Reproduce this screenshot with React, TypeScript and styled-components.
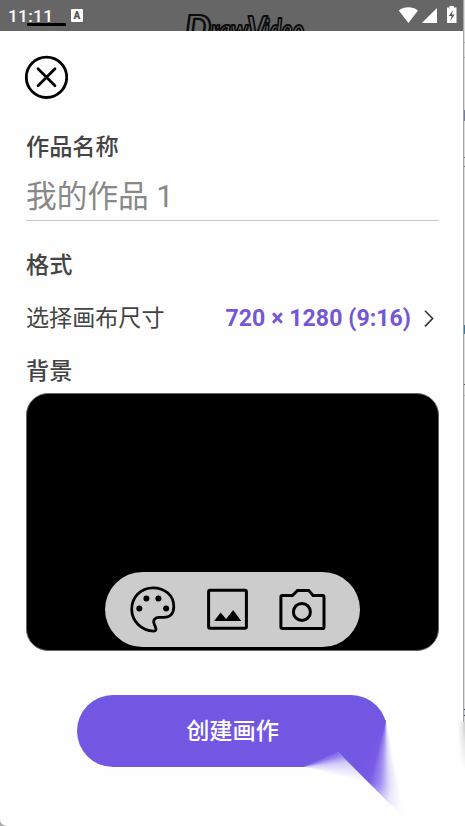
import React from "react";
import styled, { createGlobalStyle } from "styled-components";

const GlobalStyle = createGlobalStyle`
  * { box-sizing: border-box; }
  body { margin: 0; background: #fefefe; overflow: hidden; }
  button { padding: 0; border: 0; background: none; font: inherit; color: inherit; }
`;

const Screen = styled.div`
  position: relative;
  display: flex;
  flex-direction: column;
  width: 465px;
  height: 826px;
  overflow: hidden;
  background: #fefefe;
  color: #444;
  font-family: Roboto, "Noto Sans CJK SC", sans-serif;
`;

const StatusBar = styled.header`
  position: relative;
  display: flex;
  align-items: flex-start;
  flex: none;
  width: 463px;
  height: 31px;
  padding-left: 8px;
  overflow: hidden;
  background: #666;
  color: #fff;
`;

const Clock = styled.time`
  position: relative;
  z-index: 1;
  width: 62px;
  padding-top: 6px;
  font-size: 17.3px;
  line-height: 20px;
  font-weight: 500;
  letter-spacing: 0.3px;
`;

const MenuLine = styled.div`
  position: absolute;
  left: 27px;
  top: 23px;
  width: 39px;
  height: 3px;
  border-radius: 1px;
  background: #000;
`;

const InputBadge = styled.div`
  display: flex;
  align-items: center;
  justify-content: center;
  width: 12px;
  height: 13px;
  margin: 9px 0 0 1px;
  border-radius: 1px;
  background: #fff;
  color: #555;
  font-size: 10px;
  line-height: 13px;
  font-weight: 900;
`;

const Logo = styled.svg`
  position: absolute;
  left: 180px;
  top: 8px;
`;

const StatusIcons = styled.svg`
  margin-left: auto;
`;

const Form = styled.main`
  display: flex;
  flex-direction: column;
  width: 413px;
  margin-left: 26px;
`;

const CloseButton = styled.button`
  display: flex;
  width: 44px;
  height: 44px;
  margin: 24px 0 0 -2px;
`;

const Label = styled.h2<{ $gap: number }>`
  margin: ${({ $gap }) => $gap}px 0 0;
  height: 30px;
  font-size: 23.2px;
  line-height: 30px;
  font-weight: 500;
`;

const NameInput = styled.div`
  height: 59px;
  padding-top: 17px;
  border-bottom: 1px solid #c9c9c9;
  color: #888;
  font-size: 30.7px;
  line-height: 36px;
  font-weight: 400;
`;

const SizeRow = styled.div`
  display: flex;
  align-items: center;
  height: 34px;
  margin-top: 22px;
  font-size: 23.1px;
  line-height: 34px;
`;

const SizeValue = styled.strong`
  margin-left: auto;
  color: #7457d6;
  font-size: 23.1px;
  font-weight: 700;
  letter-spacing: 0.05px;
`;

const Chevron = styled.svg`
  margin: -1px 3px 0 11px;
`;

const Preview = styled.section`
  display: flex;
  align-items: flex-end;
  height: 258px;
  margin-top: 7px;
  padding: 0 0 3px 78px;
  border: 1px solid #666;
  border-radius: 22px;
  background: #000;
`;

const Tools = styled.div`
  display: flex;
  align-items: center;
  gap: 27px;
  width: 255px;
  height: 75px;
  padding: 0 0 1px 23.5px;
  border-radius: 38px;
  background: #ccc;
`;

const ToolButton = styled.button`
  display: flex;
  width: 48px;
  height: 48px;
`;

const CreateArea = styled.footer`
  position: relative;
  display: flex;
  width: 310px;
  height: 72px;
  margin: 44px 0 0 77px;
`;

const CreateButton = styled.button`
  width: 310px;
  height: 72px;
  padding-top: 1px;
  padding-left: 1px;
  border-radius: 36px;
  background: #7357e3;
  color: #fff;
  font-size: 23.2px;
  line-height: 71px;
  font-weight: 500;
  clip-path: polygon(0 0, 310px 0, 310px 26px, 309px 26px, 260px 57px, 227px 72px, 0 72px);
`;

/* The sheen fans out from the point where the button's right end stops. */
const Sheen = styled.div`
  position: absolute;
  left: 240px;
  top: 0;
  width: 100px;
  height: 131px;
  pointer-events: none;
  background: conic-gradient(
    from 160deg at 69px 25px,
    rgba(115, 87, 227, 0) 9deg,
    rgba(137, 113, 240, 0.25) 17deg,
    rgba(125, 98, 236, 0.72) 25deg,
    #775be5 35deg,
    #7357e3 50deg,
    #7357e3 100deg,
    transparent 101deg
  );
  clip-path: polygon(69px 25px, 100px 131px, 90px 126px, 19px 55px, 10px 52px, 10px 47px);
  mask-image: linear-gradient(#000 88px, rgba(0, 0, 0, 0.55) 107px, transparent 125px);
`;

const Mist = styled.div`
  position: absolute;
  left: 227px;
  top: 50px;
  width: 70px;
  height: 45px;
  pointer-events: none;
  background: conic-gradient(
    from 60deg at 0 22px,
    #7357e3 3deg,
    rgba(125, 98, 236, 0.82) 12deg,
    rgba(145, 125, 238, 0.4) 24deg,
    transparent 45deg
  );
  clip-path: polygon(0 22px, 33px 6px, 58px 31px, 58px 45px, 0 45px);
`;

const WindowEdge = styled.aside`
  position: absolute;
  top: 0;
  right: 0;
  width: 2px;
  height: 722px;
  border-left: 1px solid #a7a7aa;
  background: linear-gradient(#ddd 0 42px, #aaa 42px 43px, #ddd 43px 57px, #aaa 57px 58px, #ddd 58px 110px, #777d9a 110px 121px, #ddd 121px 157px, #777 157px 158px, #ddd 158px 166px, #777 166px 167px, #ddd 167px 325px, #397999 325px 334px, #ddd 334px 384px, #555 384px 385px, #ddd 385px 395px, #aaa 395px 396px, #ddd 396px 709px, #345 709px 710px, #ccd4dc 710px 715px, #345 715px 716px, #ddd 716px);
`;

const EdgeFade = styled.div`
  position: absolute;
  right: 0;
  top: 722px;
  width: 7px;
  height: 50px;
  background: radial-gradient(ellipse 7px 48px at right top, #ccc, #e9e9e9 45%, transparent);
`;

const Corner = styled.svg`
  position: absolute;
  left: 0;
  bottom: 0;
`;

const CloseIcon = () => (
  <svg width="44" height="44" viewBox="0 0 44 44" fill="none" stroke="#000" strokeLinecap="round">
    <circle cx="22.5" cy="22.3" r="20.2" strokeWidth="2.8" />
    <path d="m14 13.7 17 17M31 13.7l-17 17" strokeWidth="2.7" />
  </svg>
);

const PaletteIcon = () => (
  <svg width="48" height="48" viewBox="0 0 48 48" fill="none">
    <path d="M24 2.8C11.8 2.8 2.7 12 2.7 24c0 12.3 9.8 21.6 22 22.1 2.1 0 2.8-1.5 2-3.4l-1.5-3.8c-1.6-4 1-6.5 5-6.5h4.4c6.6 0 10.2-4 10.2-10.7C44.8 10.5 36 2.8 24 2.8Z" stroke="#000" strokeWidth="2.8" />
    <g fill="#000"><circle cx="10.3" cy="23.4" r="3" /><circle cx="17.4" cy="13.6" r="3" /><circle cx="29.4" cy="13.6" r="3" /><circle cx="37.1" cy="23.4" r="3" /></g>
  </svg>
);

const ImageIcon = () => (
  <svg width="48" height="48" viewBox="0 0 48 48">
    <rect x="4.6" y="5.3" width="37.8" height="38" rx="1.5" fill="none" stroke="#000" strokeWidth="3" />
    <path d="m10 36 6.7-8.5 5.4 6.5L29.2 25l8 11Z" fill="#000" />
  </svg>
);

const CameraIcon = () => (
  <svg width="48" height="48" viewBox="0 0 48 48" fill="none" stroke="#000" strokeWidth="3">
    <path d="M3.6 10.5h9.9l5-5.1h11.2l4.3 5.1h9.5q1.5 0 1.5 1.5v30q0 1.6-1.5 1.6H3.6q-1.7 0-1.7-1.6V12q0-1.5 1.7-1.5Z" />
    <circle cx="22.9" cy="26.9" r="8.5" />
  </svg>
);

export default function App() {
  return (
    <Screen>
      <GlobalStyle />
      <StatusBar>
        <MenuLine />
        <Clock>11:11</Clock>
        <InputBadge>A</InputBadge>
        <Logo width="128" height="40" viewBox="0 0 128 40">
          <g fill="#666" stroke="#0c0c0c" strokeWidth="2.2" strokeLinejoin="round" fontFamily="Lato" fontStyle="italic" fontWeight="900">
            <text x="5" y="32" fontSize="34" textLength="26" lengthAdjust="spacingAndGlyphs">D</text>
            <text x="31" y="33" fontSize="31" textLength="37" lengthAdjust="spacingAndGlyphs">raw</text>
            <text x="67" y="34" fontSize="36" textLength="19" lengthAdjust="spacingAndGlyphs">V</text>
            <text x="84" y="34" fontSize="32" textLength="40" lengthAdjust="spacingAndGlyphs">ideo</text>
          </g>
        </Logo>
        <StatusIcons width="66" height="31" viewBox="0 0 66 31" fill="#fff">
          <path d="M1.8 10.6C7 6.2 15.8 6.2 21 10.6L11.4 23ZM24.8 23 40 8v15Z" />
          <path d="M50 7.5h2.5V6H57v1.5h2.5V23H50V7.5Z" />
          <path d="m56.2 10-4.5 6h3l-1.5 5 4.5-6.4h-3Z" fill="#555" />
        </StatusIcons>
      </StatusBar>
      <Form>
        <CloseButton aria-label="关闭"><CloseIcon /></CloseButton>
        <Label $gap={33}>作品名称</Label>
        <NameInput>我的作品 1</NameInput>
        <Label $gap={29}>格式</Label>
        <SizeRow>
          <span>选择画布尺寸</span>
          <SizeValue>720 × 1280 (9:16)</SizeValue>
          <Chevron width="14" height="20" viewBox="0 0 14 20" fill="none" stroke="#333" strokeWidth="1.6"><path d="m3 1.7 7.6 7.8L3 17.4" /></Chevron>
        </SizeRow>
        <Label $gap={20}>背景</Label>
        <Preview>
          <Tools>
            <ToolButton aria-label="颜色"><PaletteIcon /></ToolButton>
            <ToolButton aria-label="图片"><ImageIcon /></ToolButton>
            <ToolButton aria-label="相机"><CameraIcon /></ToolButton>
          </Tools>
        </Preview>
      </Form>
      <CreateArea>
        <CreateButton>创建画作</CreateButton>
        <Sheen />
        <Mist />
      </CreateArea>
      <WindowEdge />
      <EdgeFade />
      <Corner width="7" height="7" viewBox="0 0 7 7"><path d="M0 0Q0 6 7 7H0Z" fill="#aaa" /></Corner>
    </Screen>
  );
}
